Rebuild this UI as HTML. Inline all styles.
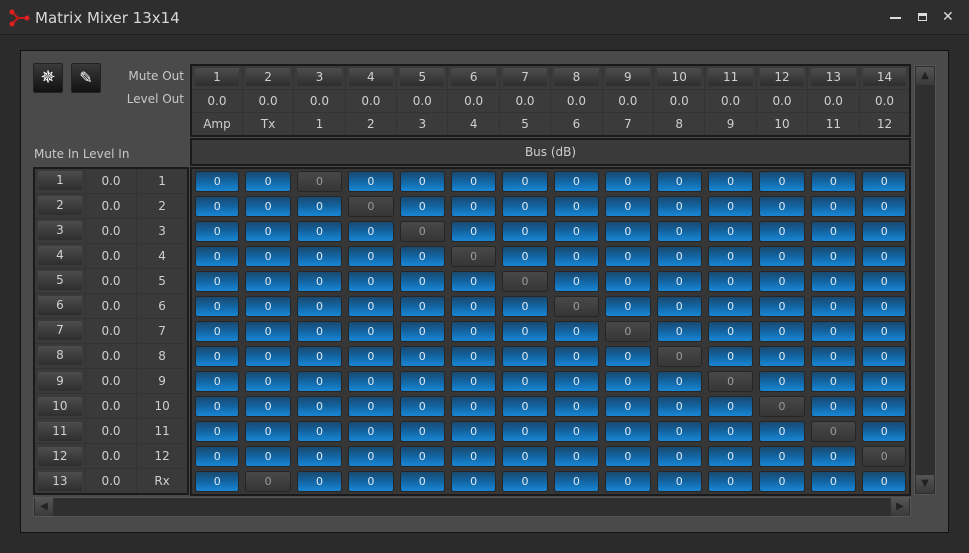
<!DOCTYPE html>
<html><head><meta charset="utf-8"><style>
*{box-sizing:border-box;margin:0;padding:0}
body{width:969px;height:553px;background:#2b2b2b;font-family:"DejaVu Sans","Liberation Sans",sans-serif;position:relative;overflow:hidden;color:#cfcfcf}
.abs{position:absolute}
#title{left:0;top:0;width:969px;height:35px;background:#2e2e2e;border-bottom:1px solid #1e1e1e}
#title span{position:absolute;left:35px;top:9px;font-size:15px;color:#d8d8d8}
#panel{left:20px;top:50px;width:929px;height:483px;background:#4a4a4a;border:1px solid #111}
.ib{width:30px;height:30px;background:linear-gradient(#3a3a3a,#111);border:1px solid #222;border-radius:2px}
.lbl{font-size:12px;color:#c8c8c8;text-align:right}
table{border-collapse:collapse;table-layout:fixed}
#hdr{left:190px;top:64px;width:721px;height:73px;background:#3b3b3b;border:2px solid #1a1a1a}
#hdr td{width:51.4px;height:23px;text-align:center;font-size:12px;color:#cfcfcf;border-right:1px solid #333;border-bottom:1px solid #333}
.mb{display:block;margin:2px 3px;height:18px;line-height:18px;background:linear-gradient(#4d4d4d,#2e2e2e);border-radius:2px;color:#d0d0d0}
#bus{left:190px;top:138px;width:721px;height:28px;background:#3a3a3a;border:2px solid #1a1a1a;font-size:12px;text-align:center;line-height:24px}
#lt{left:33px;top:167px;width:156px;height:328px;background:#3a3a3a;border:2px solid #1a1a1a}
#lt td{width:51px;height:25px;text-align:center;font-size:12px;border-right:1px solid #333;border-bottom:1px solid #333}
#lt .mb{margin:2px 3px;height:19px;line-height:19px}
#mx{left:190px;top:167px;width:721px;height:328px;background:#363636;border:2px solid #1a1a1a}
#mx td{width:51.4px;height:25px;padding:3px 4px;text-align:center;font-size:11px}
#mx td i{display:block;height:19px;line-height:19px;font-style:normal;border-radius:2px;background:linear-gradient(#1a4a70 0%,#135f98 40%,#1577bd 75%,#1a86d2 100%);color:#dfeaf5;box-shadow:0 0 0 1px #252525}
#mx td.g i{background:linear-gradient(#484848,#363636);color:#9a9a9a}
#vs{left:914px;top:65px;width:22px;height:430px;background:#2f2f2f;border:1px solid #555}
#hs{left:33px;top:497px;width:878px;height:20px;background:#2f2f2f;border:1px solid #555}
.ar{width:18px;height:18px;background:linear-gradient(#555,#3a3a3a);color:#222;font-size:10px;text-align:center;line-height:18px}
</style></head><body>
<div id="title" class="abs">
<svg class="abs" style="left:8px;top:9px" width="22" height="18" viewBox="0 0 22 18"><path d="M4 3 L10 9 L4 15 M10 9 L19 9" stroke="#c41a1a" stroke-width="2" fill="none"/><circle cx="4" cy="3" r="2.5" fill="#e02020"/><circle cx="4" cy="15" r="2.5" fill="#e02020"/><circle cx="19" cy="9" r="2.5" fill="#e02020"/></svg>
<span>Matrix Mixer 13x14</span>
<div class="abs" style="left:890px;top:17px;width:11px;height:2px;background:#ddd"></div>
<div class="abs" style="left:918px;top:13px;width:9px;height:8px;border:1px solid #ddd;border-top-width:3px"></div>
<div class="abs" style="left:942px;top:9px;font-size:14px;color:#ddd">✕</div>
</div>
<div id="panel" class="abs"></div>
<div class="abs ib" style="left:33px;top:63px;color:#fff;text-align:center;line-height:28px;font-size:18px">✵</div>
<div class="abs ib" style="left:71px;top:63px;color:#fff;text-align:center;line-height:28px;font-size:16px">✎</div>
<div class="abs lbl" style="left:100px;top:69px;width:84px">Mute Out</div>
<div class="abs lbl" style="left:100px;top:92px;width:84px">Level Out</div>
<div class="abs lbl" style="left:34px;top:147px;text-align:left">Mute In Level In</div>
<table id="hdr" class="abs">
<tr><td><span class="mb">1</span></td><td><span class="mb">2</span></td><td><span class="mb">3</span></td><td><span class="mb">4</span></td><td><span class="mb">5</span></td><td><span class="mb">6</span></td><td><span class="mb">7</span></td><td><span class="mb">8</span></td><td><span class="mb">9</span></td><td><span class="mb">10</span></td><td><span class="mb">11</span></td><td><span class="mb">12</span></td><td><span class="mb">13</span></td><td><span class="mb">14</span></td></tr>
<tr><td>0.0</td><td>0.0</td><td>0.0</td><td>0.0</td><td>0.0</td><td>0.0</td><td>0.0</td><td>0.0</td><td>0.0</td><td>0.0</td><td>0.0</td><td>0.0</td><td>0.0</td><td>0.0</td></tr>
<tr><td>Amp</td><td>Tx</td><td>1</td><td>2</td><td>3</td><td>4</td><td>5</td><td>6</td><td>7</td><td>8</td><td>9</td><td>10</td><td>11</td><td>12</td></tr>
</table>
<div id="bus" class="abs">Bus (dB)</div>
<table id="lt" class="abs">
<tr><td><span class="mb">1</span></td><td>0.0</td><td>1</td></tr>
<tr><td><span class="mb">2</span></td><td>0.0</td><td>2</td></tr>
<tr><td><span class="mb">3</span></td><td>0.0</td><td>3</td></tr>
<tr><td><span class="mb">4</span></td><td>0.0</td><td>4</td></tr>
<tr><td><span class="mb">5</span></td><td>0.0</td><td>5</td></tr>
<tr><td><span class="mb">6</span></td><td>0.0</td><td>6</td></tr>
<tr><td><span class="mb">7</span></td><td>0.0</td><td>7</td></tr>
<tr><td><span class="mb">8</span></td><td>0.0</td><td>8</td></tr>
<tr><td><span class="mb">9</span></td><td>0.0</td><td>9</td></tr>
<tr><td><span class="mb">10</span></td><td>0.0</td><td>10</td></tr>
<tr><td><span class="mb">11</span></td><td>0.0</td><td>11</td></tr>
<tr><td><span class="mb">12</span></td><td>0.0</td><td>12</td></tr>
<tr><td><span class="mb">13</span></td><td>0.0</td><td>Rx</td></tr>
</table>
<table id="mx" class="abs">
<tr><td><i>0</i></td><td><i>0</i></td><td class="g"><i>0</i></td><td><i>0</i></td><td><i>0</i></td><td><i>0</i></td><td><i>0</i></td><td><i>0</i></td><td><i>0</i></td><td><i>0</i></td><td><i>0</i></td><td><i>0</i></td><td><i>0</i></td><td><i>0</i></td></tr>
<tr><td><i>0</i></td><td><i>0</i></td><td><i>0</i></td><td class="g"><i>0</i></td><td><i>0</i></td><td><i>0</i></td><td><i>0</i></td><td><i>0</i></td><td><i>0</i></td><td><i>0</i></td><td><i>0</i></td><td><i>0</i></td><td><i>0</i></td><td><i>0</i></td></tr>
<tr><td><i>0</i></td><td><i>0</i></td><td><i>0</i></td><td><i>0</i></td><td class="g"><i>0</i></td><td><i>0</i></td><td><i>0</i></td><td><i>0</i></td><td><i>0</i></td><td><i>0</i></td><td><i>0</i></td><td><i>0</i></td><td><i>0</i></td><td><i>0</i></td></tr>
<tr><td><i>0</i></td><td><i>0</i></td><td><i>0</i></td><td><i>0</i></td><td><i>0</i></td><td class="g"><i>0</i></td><td><i>0</i></td><td><i>0</i></td><td><i>0</i></td><td><i>0</i></td><td><i>0</i></td><td><i>0</i></td><td><i>0</i></td><td><i>0</i></td></tr>
<tr><td><i>0</i></td><td><i>0</i></td><td><i>0</i></td><td><i>0</i></td><td><i>0</i></td><td><i>0</i></td><td class="g"><i>0</i></td><td><i>0</i></td><td><i>0</i></td><td><i>0</i></td><td><i>0</i></td><td><i>0</i></td><td><i>0</i></td><td><i>0</i></td></tr>
<tr><td><i>0</i></td><td><i>0</i></td><td><i>0</i></td><td><i>0</i></td><td><i>0</i></td><td><i>0</i></td><td><i>0</i></td><td class="g"><i>0</i></td><td><i>0</i></td><td><i>0</i></td><td><i>0</i></td><td><i>0</i></td><td><i>0</i></td><td><i>0</i></td></tr>
<tr><td><i>0</i></td><td><i>0</i></td><td><i>0</i></td><td><i>0</i></td><td><i>0</i></td><td><i>0</i></td><td><i>0</i></td><td><i>0</i></td><td class="g"><i>0</i></td><td><i>0</i></td><td><i>0</i></td><td><i>0</i></td><td><i>0</i></td><td><i>0</i></td></tr>
<tr><td><i>0</i></td><td><i>0</i></td><td><i>0</i></td><td><i>0</i></td><td><i>0</i></td><td><i>0</i></td><td><i>0</i></td><td><i>0</i></td><td><i>0</i></td><td class="g"><i>0</i></td><td><i>0</i></td><td><i>0</i></td><td><i>0</i></td><td><i>0</i></td></tr>
<tr><td><i>0</i></td><td><i>0</i></td><td><i>0</i></td><td><i>0</i></td><td><i>0</i></td><td><i>0</i></td><td><i>0</i></td><td><i>0</i></td><td><i>0</i></td><td><i>0</i></td><td class="g"><i>0</i></td><td><i>0</i></td><td><i>0</i></td><td><i>0</i></td></tr>
<tr><td><i>0</i></td><td><i>0</i></td><td><i>0</i></td><td><i>0</i></td><td><i>0</i></td><td><i>0</i></td><td><i>0</i></td><td><i>0</i></td><td><i>0</i></td><td><i>0</i></td><td><i>0</i></td><td class="g"><i>0</i></td><td><i>0</i></td><td><i>0</i></td></tr>
<tr><td><i>0</i></td><td><i>0</i></td><td><i>0</i></td><td><i>0</i></td><td><i>0</i></td><td><i>0</i></td><td><i>0</i></td><td><i>0</i></td><td><i>0</i></td><td><i>0</i></td><td><i>0</i></td><td><i>0</i></td><td class="g"><i>0</i></td><td><i>0</i></td></tr>
<tr><td><i>0</i></td><td><i>0</i></td><td><i>0</i></td><td><i>0</i></td><td><i>0</i></td><td><i>0</i></td><td><i>0</i></td><td><i>0</i></td><td><i>0</i></td><td><i>0</i></td><td><i>0</i></td><td><i>0</i></td><td><i>0</i></td><td class="g"><i>0</i></td></tr>
<tr><td><i>0</i></td><td class="g"><i>0</i></td><td><i>0</i></td><td><i>0</i></td><td><i>0</i></td><td><i>0</i></td><td><i>0</i></td><td><i>0</i></td><td><i>0</i></td><td><i>0</i></td><td><i>0</i></td><td><i>0</i></td><td><i>0</i></td><td><i>0</i></td></tr>
</table>
<div id="vs" class="abs">
<div class="abs ar" style="left:1px;top:1px">▲</div>
<div class="abs ar" style="left:1px;top:409px">▼</div>
</div>
<div id="hs" class="abs">
<div class="abs ar" style="left:1px;top:0px">◀</div>
<div class="abs ar" style="left:857px;top:0px">▶</div>
</div>
</body></html>
